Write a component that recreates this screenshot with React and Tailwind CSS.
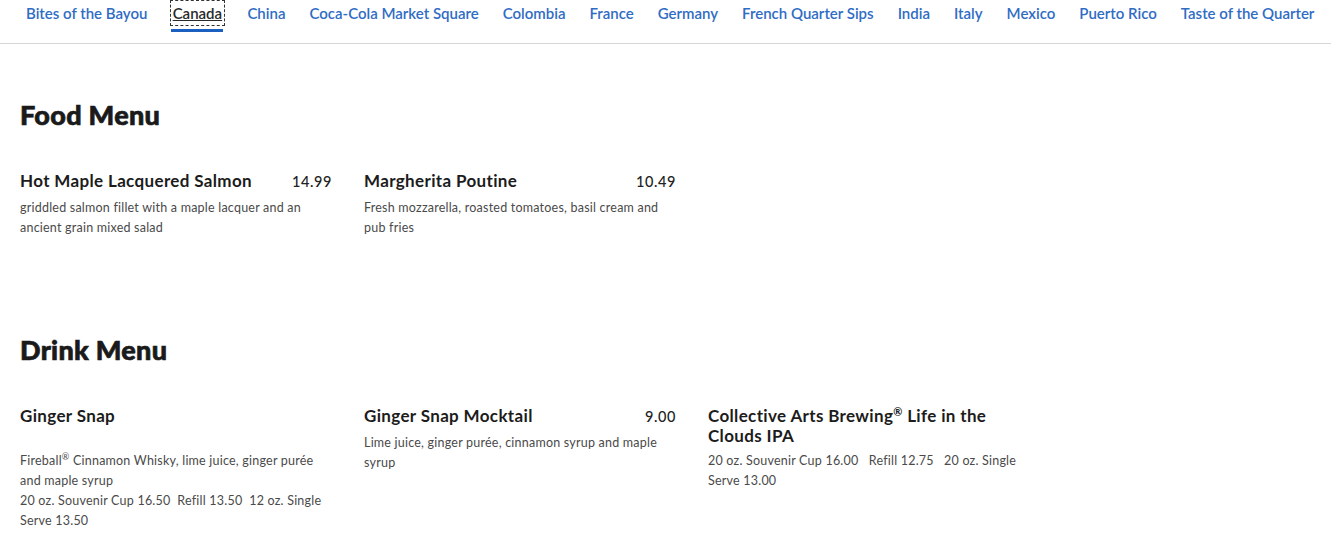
const tabs = ['Bites of the Bayou', 'Canada', 'China', 'Coca-Cola Market Square', 'Colombia', 'France', 'Germany', 'French Quarter Sips', 'India', 'Italy', 'Mexico', 'Puerto Rico', 'Taste of the Quarter']

const food = [
  { name: 'Hot Maple Lacquered Salmon', price: '14.99', desc: ['griddled salmon fillet with a maple lacquer and an ancient grain mixed salad'] },
  { name: 'Margherita Poutine', price: '10.49', desc: ['Fresh mozzarella, roasted tomatoes, basil cream and pub fries'] },
]

function Item({ name, price, children, gap }) {
  return (
    <div className="w-[312px] pt-[2px]">
      <div className="flex items-baseline justify-between gap-4">
        <h3 className="text-[17px] leading-5 font-bold tracking-[0.35px] text-[#1c1c1c]">{name}</h3>
        {price && <span className="text-[14.5px] font-medium text-[#222] tracking-[0.6px]">{price}</span>}
      </div>
      {gap && <div className="h-5" />}
      <div className="mt-[5px] text-[12.5px] leading-5 tracking-[0.22px] text-[#4a4a4a]">{children}</div>
    </div>
  )
}

export default function App() {
  return (
    <div className="bg-white min-h-screen font-['Lato',sans-serif] overflow-hidden">
      <nav className="h-[44px] border-b border-[#d6d6d6] flex gap-6 pl-[26px] whitespace-nowrap overflow-hidden">
        {tabs.map((t) => (
          <div key={t} className="flex flex-col items-center shrink-0">
            <span className={t === 'Canada' ? 'mt-[3px] leading-5 text-[15px] font-semibold text-[#2a2a2a] underline outline-1 outline-dashed outline-offset-[2px] outline-[#333]' : 'mt-[3px] leading-5 text-[15px] font-semibold text-[#2f6cc4]'}>{t}</span>
            {t === 'Canada' && <div className="mt-[6px] h-[3px] w-[52px] bg-[#1b5fc1]" />}
          </div>
        ))}
      </nav>

      <main className="px-5">
        <h2 className="mt-[55px] text-[27px] leading-8 font-black tracking-[0.3px] text-[#1a1a1a] [-webkit-text-stroke:0.7px_#1a1a1a]">Food Menu</h2>
        <div className="mt-[38px] flex gap-8">
          {food.map((f) => (
            <Item key={f.name} name={f.name} price={f.price}>{f.desc[0]}</Item>
          ))}
        </div>

        <h2 className="mt-[96px] text-[27px] leading-8 font-black tracking-[0.3px] text-[#1a1a1a] [-webkit-text-stroke:0.7px_#1a1a1a]">Drink Menu</h2>
        <div className="mt-[38px] flex gap-8">
          <Item name="Ginger Snap" gap>
            <p>Fireball<sup className="text-[9px]">®</sup> Cinnamon Whisky, lime juice, ginger purée and maple syrup</p>
            <p>20 oz. Souvenir Cup 16.50&nbsp; Refill 13.50&nbsp; 12 oz. Single Serve 13.50</p>
          </Item>
          <Item name="Ginger Snap Mocktail" price="9.00">
            Lime juice, ginger purée, cinnamon syrup and maple syrup
          </Item>
          <Item name={<>Collective Arts Brewing<sup className="text-[11px]">®</sup> Life in the Clouds IPA</>}>
            20 oz. Souvenir Cup 16.00&nbsp;&nbsp; Refill 12.75&nbsp;&nbsp; 20 oz. Single Serve 13.00
          </Item>
        </div>
      </main>
    </div>
  )
}
